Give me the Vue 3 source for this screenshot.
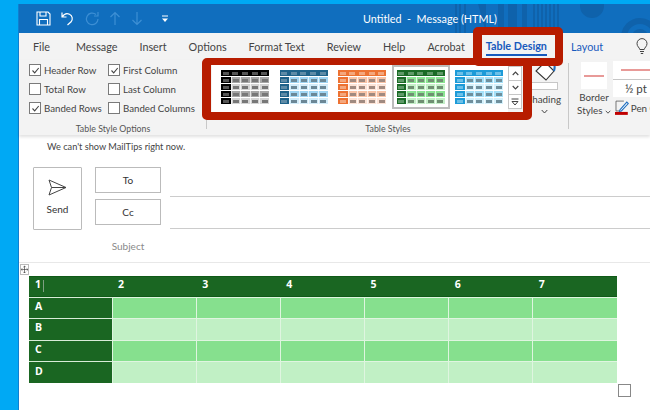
<script setup>
const tabs = ['File', 'Message', 'Insert', 'Options', 'Format Text', 'Review', 'Help', 'Acrobat']

const optionsLeft = [
  { label: 'Header Row', on: true },
  { label: 'Total Row', on: false },
  { label: 'Banded Rows', on: true },
]
const optionsRight = [
  { label: 'First Column', on: true },
  { label: 'Last Column', on: false },
  { label: 'Banded Columns', on: false },
]

const thumbs = [
  { head: '#000000', headDash: '#555', dash: '#777', band: '#a6a6a6', light: '#d4d4d4' },
  { head: '#1f6289', headDash: '#5f8ba6', dash: '#6b8796', band: '#9fd4f2', light: '#d2ecfa' },
  { head: '#ed7232', headDash: '#f4a77d', dash: '#a08a80', band: '#f8c4a8', light: '#fde3d6' },
  { head: '#1a6b26', headDash: '#5f9a68', dash: '#6f8f72', band: '#8ae492', light: '#c4f0c8', active: true },
  { head: '#1d9bd8', headDash: '#6cc0e8', dash: '#6f8f9c', band: '#a4e0f8', light: '#d4f1fc' },
]

function cellColor(t, r, c) {
  if (r === 0 || c === 0) return t.head
  return r % 2 === 1 ? t.band : t.light
}

function dashColor(t, r, c) {
  return r === 0 || c === 0 ? t.headDash : t.dash
}

const cols = ['1', '2', '3', '4', '5', '6', '7']
const rows = ['A', 'B', 'C', 'D']
</script>

<template>
  <div class="page">
    <div class="window">
      <header class="titlebar">
        <svg class="deco" width="200" height="33" viewBox="0 0 200 33">
          <g fill="#0f62ab">
            <rect x="5" y="0" width="2" height="33" />
            <rect x="9" y="0" width="2" height="33" />
            <rect x="14" y="0" width="2" height="33" />
            <path d="M27 0h9v33z" />
            <rect x="48" y="0" width="6" height="33" />
            <rect x="58" y="0" width="9" height="33" />
            <rect x="72" y="0" width="5" height="33" />
            <rect x="83" y="0" width="2" height="33" />
            <rect x="87" y="0" width="2" height="33" />
            <rect x="91" y="0" width="2" height="33" />
            <rect x="95" y="0" width="2" height="33" />
            <rect x="99" y="0" width="2" height="33" />
            <rect x="103" y="0" width="2" height="33" />
            <rect x="107" y="0" width="2" height="33" />
            <circle cx="142" cy="6" r="12" />
          </g>
          <circle cx="190" cy="37" r="16" fill="none" stroke="#0f62ab" stroke-width="6" />
          <circle cx="190" cy="37" r="6" fill="none" stroke="#0f62ab" stroke-width="4" />
        </svg>
        <div class="qat">
          <svg width="15" height="15" viewBox="0 0 15 15" fill="none" stroke="#fff" stroke-width="1.1">
            <path d="M1 1h11l2 2v11H1z" />
            <path d="M4 1v4h6V1M3.5 14V8.5h8V14" />
          </svg>
          <svg width="14" height="15" viewBox="0 0 14 15" fill="none" stroke="#fff" stroke-width="1.2">
            <path d="M1 1.5v4.5h4.5M1.2 6C3 3 6 2 8.5 3.2c3 1.5 3.6 5.2 1.6 7.6L6.500 14" />
          </svg>
          <svg width="14" height="15" viewBox="0 0 14 15" fill="none" stroke="#3d8fd4" stroke-width="1.2">
            <path d="M11 3.500A5.800 5.800 0 1 0 13 8M13 1v4h-4" />
          </svg>
          <svg width="12" height="15" viewBox="0 0 12 15" fill="none" stroke="#3d8fd4" stroke-width="1.2">
            <path d="M6 14V1.500M1.500 6L6 1.500 10.500 6" />
          </svg>
          <svg width="12" height="15" viewBox="0 0 12 15" fill="none" stroke="#3d8fd4" stroke-width="1.2">
            <path d="M6 1v12.500M1.500 9L6 13.500 10.500 9" />
          </svg>
          <svg class="qat-more" width="8" height="8" viewBox="0 0 8 8">
            <path d="M1 1h6" stroke="#fff" stroke-width="1" />
            <path d="M1 3.500h6L4 7z" fill="#fff" />
          </svg>
        </div>
        <span class="title">Untitled&nbsp; -&nbsp; Message (HTML)</span>
      </header>

      <nav class="tabs">
        <span v-for="t in tabs" :key="t" class="tab">{{ t }}</span>
        <span class="tab tab-active">Table Design</span>
        <span class="tab tab-layout">Layout</span>
        <svg class="bulb" width="12" height="17" viewBox="0 0 12 17" fill="none" stroke="#444" stroke-width="1">
          <path d="M3.800 11.500C3.500 9.500 1 8.600 1 5.600a5 5 0 0 1 10 0c0 3-2.500 3.900-2.800 5.900z" />
          <path d="M4 13.500h4M4.800 15.500h2.400" />
        </svg>
      </nav>

      <section class="ribbon">
        <div class="group group-options">
          <div class="group-body opts">
            <div class="opt-col">
              <label v-for="o in optionsLeft" :key="o.label" class="opt">
                <span class="box">
                  <svg v-if="o.on" width="9" height="9" viewBox="0 0 9 9" fill="none" stroke="#444" stroke-width="1.1">
                    <path d="M1.500 4.500L3.700 6.800 7.700 2" />
                  </svg>
                </span>
                {{ o.label }}
              </label>
            </div>
            <div class="opt-col">
              <label v-for="o in optionsRight" :key="o.label" class="opt">
                <span class="box">
                  <svg v-if="o.on" width="9" height="9" viewBox="0 0 9 9" fill="none" stroke="#444" stroke-width="1.1">
                    <path d="M1.500 4.500L3.700 6.800 7.700 2" />
                  </svg>
                </span>
                {{ o.label }}
              </label>
            </div>
          </div>
          <div class="group-label">Table Style Options</div>
        </div>

        <div class="group group-styles">
          <div class="group-body gallery-row">
            <div class="gallery">
              <div v-for="(t, i) in thumbs" :key="i" class="thumb" :class="{ active: t.active }">
                <div class="mini">
                  <template v-for="r in 5" :key="r">
                    <span
                      v-for="c in 5"
                      :key="c"
                      class="mini-cell"
                      :class="{ lit: r > 1 && c > 1 }"
                      :style="{ background: cellColor(t, r - 1, c - 1) }"
                    ><i :style="{ background: dashColor(t, r - 1, c - 1) }"></i></span>
                  </template>
                </div>
              </div>
            </div>
            <div class="scroller">
              <span class="scroll-btn">
                <svg width="7" height="5" viewBox="0 0 7 5" fill="none" stroke="#444" stroke-width="1.1"><path d="M.7 4L3.500 1l2.800 3" /></svg>
              </span>
              <span class="scroll-btn">
                <svg width="7" height="5" viewBox="0 0 7 5" fill="none" stroke="#444" stroke-width="1.1"><path d="M.7 1l2.800 3 2.800-3" /></svg>
              </span>
              <span class="scroll-btn">
                <svg width="8" height="8" viewBox="0 0 8 8" fill="none" stroke="#444" stroke-width="1"><path d="M.5 1h7M1 3.500h6L4 7z" /></svg>
              </span>
            </div>
            <div class="shading">
              <svg class="bucket" width="28" height="20" viewBox="0 0 28 20" fill="none">
                <path d="M15 1l9 9-8 9-10-9z" fill="#fff" stroke="#333" stroke-width="1.1" />
                <path d="M19 5c1-3 4-4 5-2s1 4 0 7" stroke="#1f6fc0" stroke-width="2" />
              </svg>
              <span class="shade-bar"></span>
              <span class="shade-text">Shading</span>
              <svg width="7" height="5" viewBox="0 0 7 5" fill="none" stroke="#444" stroke-width="1"><path d="M.7 1l2.800 3 2.800-3" /></svg>
            </div>
          </div>
          <div class="group-label">Table Styles</div>
        </div>

        <div class="group group-borders">
          <div class="group-body borders">
            <div class="border-styles">
              <span class="border-swatch"><i></i></span>
              <span class="border-text">Border</span>
              <span class="border-text">Styles
                <svg width="6" height="4" viewBox="0 0 7 5" fill="none" stroke="#444" stroke-width="1.1"><path d="M.7 1l2.800 3 2.800-3" /></svg>
              </span>
            </div>
            <div class="pen">
              <span class="pen-line"><i></i></span>
              <span class="pen-size">½ pt</span>
              <span class="pen-color">
                <svg width="14" height="15" viewBox="0 0 14 15" fill="none">
                  <path d="M1 1h8M1 1v10h4" stroke="#555" stroke-width=".8" />
                  <path d="M5 10l7-8 1.500 1.500-7 7.500-2 .5z" fill="#fff" stroke="#1f6fc0" stroke-width="1.1" />
                  <rect x="0" y="12" width="13" height="3" fill="#c00000" />
                </svg>
                Pen Color
              </span>
            </div>
          </div>
        </div>

        <div class="highlight highlight-gallery"></div>
        <div class="highlight highlight-tab"></div>
      </section>

      <main class="compose">
        <p class="mailtips">We can't show MailTips right now.</p>
        <div class="fields">
          <button class="send" type="button">
            <svg width="19" height="17" viewBox="0 0 19 17" fill="none" stroke="#444" stroke-width="1">
              <path d="M1 1l17 7.500L1 16l2.500-7.500zM3.500 8.500H18" />
            </svg>
            Send
          </button>
          <div class="address">
            <div class="addr-row"><button class="addr-btn" type="button">To</button><span class="addr-line"></span></div>
            <div class="addr-row"><button class="addr-btn" type="button">Cc</button><span class="addr-line"></span></div>
            <div class="subject-row"><span class="subject">Subject</span></div>
          </div>
        </div>
        <div class="rule"></div>

        <div class="table-wrap">
          <span class="move-handle">
            <svg width="7" height="9" viewBox="0 0 9 9" fill="none" stroke="#333" stroke-width=".8">
              <path d="M4.500 0v9M0 4.500h9M3 1.500L4.500 0 6 1.500M3 7.500L4.500 9 6 7.500M1.500 3L0 4.500 1.500 6M7.500 3L9 4.500 7.500 6" />
            </svg>
          </span>
          <table class="doc-table">
            <thead>
              <tr>
                <th v-for="(c, i) in cols" :key="c">{{ c }}<span v-if="i === 0" class="caret"></span></th>
              </tr>
            </thead>
            <tbody>
              <tr v-for="(r, i) in rows" :key="r" :class="i % 2 ? 'light' : 'band'">
                <th>{{ r }}</th>
                <td v-for="n in 6" :key="n"></td>
              </tr>
            </tbody>
          </table>
          <span class="resize-handle"></span>
        </div>
      </main>
    </div>
  </div>
</template>

<style>
html, body {
  margin: 0;
  background: #00a9f4;
  overflow: hidden;
}
</style>

<style scoped>
.page {
  width: 650px;
  height: 410px;
  overflow: hidden;
  background: #00a9f4;
  padding: 4px 0 0 19px;
  box-sizing: border-box;
  font-family: Lato, "Noto Sans", sans-serif;
  color: #444;
}

.window {
  width: 631px;
  height: 406px;
  background: #fff;
  display: flex;
  flex-direction: column;
  box-shadow: -1px 0 0 #0f7fd0;
}

.titlebar {
  position: relative;
  height: 29px;
  flex: none;
  background: #106ebe;
  display: flex;
  align-items: center;
  overflow: hidden;
}

.deco {
  position: absolute;
  right: 0;
  top: -4px;
}

.qat {
  position: relative;
  display: flex;
  align-items: center;
  gap: 10px;
  padding-left: 17px;
  width: 165px;
  box-sizing: border-box;
}

.qat-more {
  margin-left: 8px;
}

.title {
  position: relative;
  margin-left: 179px;
  color: #fff;
  font-size: 10.8px;
}

.tabs {
  flex: none;
  height: 27px;
  background: #f3f3f3;
  display: flex;
  align-items: center;
  padding-left: 14px;
  font-size: 10.8px;
  color: #444;
  white-space: nowrap;
}

.tab {
  margin-right: 22px;
}

.tab:first-child {
  margin-right: 26px;
}

.tab-active {
  color: #185abd;
  font-weight: 700;
  margin: 1px 24px 0 -1px;
  border-bottom: 2px solid #185abd;
  line-height: 16px;
}

.tab-layout {
  color: #185abd;
  margin-right: 0;
}

.bulb {
  margin-left: 33px;
}

.ribbon {
  position: relative;
  flex: none;
  height: 75px;
  background: #f3f3f3;
  display: flex;
  box-shadow: 0 2px 3px rgba(0, 0, 0, 0.12);
  z-index: 1;
}

.group {
  display: flex;
  flex-direction: column;
  box-sizing: border-box;
  position: relative;
}

.group::after {
  content: "";
  position: absolute;
  right: 0;
  top: 3px;
  bottom: 6px;
  width: 1px;
  background: #c8c8c8;
}

.group-body {
  flex: 1;
  min-height: 0;
}

.group-label {
  height: 12px;
  line-height: 12px;
  font-size: 8.8px;
  color: #555;
  text-align: center;
  flex: none;
}

.group-options {
  width: 188px;
}

.opts {
  display: flex;
  padding: 4px 0 0 10px;
}

.opt-col {
  display: flex;
  flex-direction: column;
  gap: 7px;
  width: 79px;
}

.opt {
  display: flex;
  align-items: center;
  gap: 3px;
  height: 12px;
  font-size: 9.7px;
  white-space: nowrap;
}

.box {
  width: 10px;
  height: 10px;
  border: 1px solid #7a7a7a;
  background: #fff;
  display: flex;
  align-items: center;
  justify-content: center;
  flex: none;
}

.group-styles {
  width: 362px;
}

.gallery-row {
  display: flex;
  padding: 4px 0 0 5px;
}

.gallery {
  width: 296px;
  height: 48px;
  background: #fff;
  display: flex;
  gap: 10.5px;
  padding: 6px 0 0 9px;
  box-sizing: border-box;
  flex: none;
}

.thumb {
  width: 48px;
  height: 34px;
  flex: none;
}

.thumb.active {
  box-shadow: 0 0 0 3px #fff, 0 0 0 5px #bcbcbc;
}

.mini {
  display: grid;
  grid-template-columns: repeat(5, 1fr);
  grid-template-rows: repeat(5, 1fr);
  gap: 1px 0;
  height: 100%;
  background: #fff;
}

.mini-cell {
  display: flex;
  align-items: center;
  justify-content: center;
  box-sizing: border-box;
}

.mini-cell.lit {
  border-left: 1px solid rgba(255, 255, 255, 0.7);
}

.mini-cell i {
  width: 6px;
  height: 3px;
}

.scroller {
  width: 14px;
  display: flex;
  flex-direction: column;
  flex: none;
  padding-top: 2px;
  box-sizing: border-box;
}

.scroll-btn {
  height: 15px;
  box-sizing: border-box;
  background: #fff;
  border: 1px solid #c6c6c6;
  margin-bottom: -1px;
  display: flex;
  align-items: center;
  justify-content: center;
}

.shading {
  display: flex;
  flex-direction: column;
  align-items: center;
  margin-left: 5px;
  width: 34px;
  font-size: 9.8px;
  white-space: nowrap;
}

.bucket {
  margin-top: -3px;
  flex: none;
}

.shade-bar {
  width: 26px;
  height: 6px;
  margin-top: 1px;
  background: #fff;
  border: 1px solid #c6c6c6;
  flex: none;
}

.shade-text {
  line-height: 14px;
  margin: 2px 0 3px;
}

.group-borders {
  flex: 1;
  min-width: 0;
  overflow: hidden;
}

.group-borders::after {
  display: none;
}

.borders {
  display: flex;
  gap: 1px;
  padding: 2px 0 0 7px;
}

.border-styles {
  display: flex;
  flex-direction: column;
  align-items: center;
  width: 36px;
  flex: none;
  font-size: 9.8px;
  line-height: 13px;
}

.border-swatch {
  width: 26px;
  height: 27px;
  background: #fff;
  display: flex;
  align-items: center;
  margin-bottom: 2px;
  flex: none;
}

.border-swatch i {
  display: block;
  width: 20px;
  height: 2px;
  margin-left: 3px;
  background: #e89a98;
}

.border-text {
  white-space: nowrap;
}

.pen {
  display: flex;
  flex-direction: column;
  width: 60px;
  flex: none;
  font-size: 9.8px;
  margin-top: -1px;
}

.pen-line {
  height: 18px;
  background: #fff;
  display: flex;
  align-items: center;
  flex: none;
}

.pen-line i {
  display: block;
  width: 100%;
  height: 2px;
  margin-left: 8px;
  background: #e89a98;
}

.pen-size {
  height: 17px;
  line-height: 17px;
  background: #fff;
  border-top: 1px solid #c6c6c6;
  padding-left: 12px;
  font-size: 11.5px;
  flex: none;
}

.pen-color {
  display: flex;
  align-items: center;
  gap: 2px;
  margin-top: 3px;
  margin-left: 2px;
  white-space: nowrap;
}

.highlight {
  position: absolute;
  border: 7px solid #b71c00;
  box-sizing: border-box;
  pointer-events: none;
}

.highlight-gallery {
  left: 183px;
  top: -2px;
  width: 330px;
  height: 62px;
  border-width: 7px 9px 8px;
  border-radius: 5px;
}

.highlight-tab {
  left: 454px;
  top: -33px;
  width: 90px;
  height: 39px;
  border-width: 8px 8px 8px 9px;
  border-radius: 5px;
  z-index: 1;
}

.compose {
  flex: 1;
  background: #fff;
  min-height: 0;
}

.mailtips {
  margin: 0;
  padding: 6px 0 0 28px;
  height: 32px;
  box-sizing: border-box;
  font-size: 9.2px;
  color: #444;
}

.fields {
  display: flex;
  padding-left: 14px;
}

.send {
  width: 49px;
  height: 63px;
  background: #fff;
  border: 1px solid #bbb;
  border-radius: 1px;
  font: inherit;
  font-size: 10px;
  color: #333;
  display: flex;
  flex-direction: column;
  align-items: center;
  gap: 7px;
  padding: 11px 0 0;
  box-sizing: border-box;
  flex: none;
}

.address {
  flex: 1;
  margin-left: 13px;
}

.addr-row {
  display: flex;
  margin-bottom: 6px;
  height: 26px;
}

.addr-btn {
  width: 66px;
  height: 26px;
  background: #fff;
  border: 1px solid #bbb;
  font: inherit;
  font-size: 10px;
  color: #333;
  padding: 0;
  flex: none;
}

.addr-line {
  flex: 1;
  align-self: flex-end;
  height: 1px;
  margin: 0 0 -4px 9px;
  background: #ccc;
}

.subject-row {
  width: 66px;
  height: 20px;
  margin-top: 11px;
  display: flex;
  justify-content: center;
  align-items: center;
}

.subject {
  font-size: 10px;
  color: #8a8a8a;
}

.rule {
  height: 1px;
  background: #e8e8e8;
  margin-top: 6px;
}

.table-wrap {
  position: relative;
  padding: 13px 0 0 10px;
}

.move-handle {
  position: absolute;
  left: 1px;
  top: 1px;
  width: 7px;
  height: 9px;
  border: 1px solid #bbb;
  background: #fff;
  display: flex;
}

.resize-handle {
  position: absolute;
  left: 599px;
  top: 121px;
  width: 11px;
  height: 11px;
  border: 1px solid #888;
  background: #fff;
}

.doc-table {
  width: 588px;
  table-layout: fixed;
  border-collapse: collapse;
  font-family: "Open Sans", sans-serif;
  font-size: 10.5px;
  line-height: 13px;
  color: #fff;
}

.doc-table tr {
  height: 21.4px;
}

.doc-table th {
  background: #1a6622;
  font-weight: 700;
  text-align: left;
  padding: 0 0 3px 6px;
  box-sizing: border-box;
  border-top: 1px solid #d8ecd8;
}

.doc-table th:first-child {
  width: 83px;
}

.doc-table thead th {
  border-top: none;
  box-shadow: inset 0 1px 0 #0f5a17, inset 0 -1px 0 #0f5a17;
}

.caret {
  display: inline-block;
  width: 1px;
  height: 12px;
  margin-left: 2px;
  background: #7f9f82;
  vertical-align: middle;
}

.doc-table td {
  border-left: 1px solid #dff5e0;
  border-top: 1px solid #dff5e0;
}

.band td {
  background: #86e08e;
}

.light td {
  background: #c1f0c5;
}
</style>
